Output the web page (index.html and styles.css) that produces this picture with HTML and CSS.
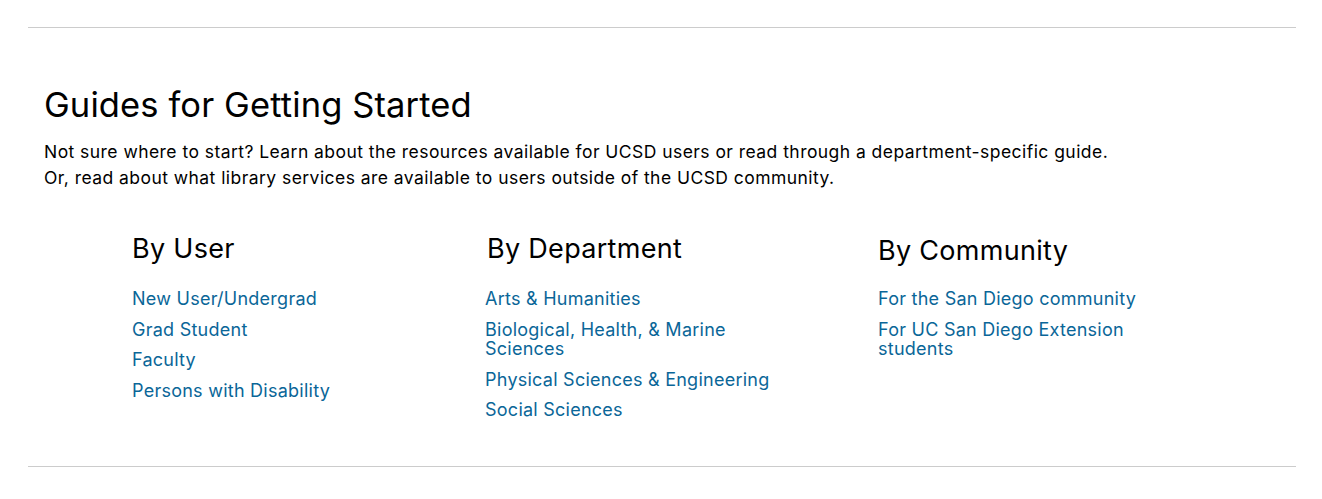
FILE: index.html
```html
<!DOCTYPE html>
<html lang="en">
<head>
<meta charset="utf-8">
<title>Guides for Getting Started</title>
<link rel="stylesheet" href="styles.css">
</head>
<body>
<div class="page">
  <hr class="rule">
  <section class="guides">
    <h2 class="guides-title">Guides for Getting Started</h2>
    <p class="guides-intro">Not sure where to start? Learn about the resources available for UCSD users or read through a department-specific guide.<br>Or, read about what library services are available to users outside of the UCSD community.</p>
    <div class="columns">
      <div class="col col-user">
        <h3 class="col-title">By User</h3>
        <ul class="links">
          <li><a href="#">New User/Undergrad</a></li>
          <li><a href="#">Grad Student</a></li>
          <li><a href="#">Faculty</a></li>
          <li><a href="#">Persons with Disability</a></li>
        </ul>
      </div>
      <div class="col col-dept">
        <h3 class="col-title">By Department</h3>
        <ul class="links">
          <li><a href="#">Arts &amp; Humanities</a></li>
          <li><a href="#">Biological, Health, &amp; Marine Sciences</a></li>
          <li><a href="#">Physical Sciences &amp; Engineering</a></li>
          <li><a href="#">Social Sciences</a></li>
        </ul>
      </div>
      <div class="col col-comm">
        <h3 class="col-title">By Community</h3>
        <ul class="links">
          <li><a href="#">For the San Diego community</a></li>
          <li><a href="#">For UC San Diego Extension students</a></li>
        </ul>
      </div>
    </div>
  </section>
  <hr class="rule">
</div>
</body>
</html>
```
FILE: styles.css
```css
html, body { margin: 0; padding: 0; background: #fff; }
body { font-family: Inter, "Open Sans", sans-serif; color: #000; }
.page { padding: 27px 26px 0 28px; }
.rule { margin: 0; border: 0; border-top: 1px solid #cccccc; height: 0; }
.guides { padding: 0 0 0 16px; }
.guides-title {
  margin: 56px 0 0;
  font-size: 34.5px;
  font-weight: 400;
  line-height: 42px;
  letter-spacing: 0.12px;
}
.guides-intro {
  margin: 13px 0 0;
  font-size: 17.5px;
  line-height: 26px;
  letter-spacing: 0.45px;
}
.columns {
  display: grid;
  grid-template-columns: 353px 393px 300px;
  margin: 41px 0 0 88px;
  padding-bottom: 46px;
}
.col-title {
  margin: 0;
  font-size: 27px;
  font-weight: 400;
  line-height: 34px;
  letter-spacing: 0.3px;
}
.col-comm .col-title { margin-top: 2px; }
.col-comm .links { margin-top: 21px; }
.col-dept { width: 300px; }
.col-dept .col-title { margin-left: 2px; }
.links {
  list-style: none;
  margin: 23px 0 0;
  padding: 0;
  display: flex;
  flex-direction: column;
  gap: 11px;
}
.links li { font-size: 18px; line-height: 19.5px; letter-spacing: 0.25px; }
.links a { color: #0a6698; text-decoration: none; }
```
